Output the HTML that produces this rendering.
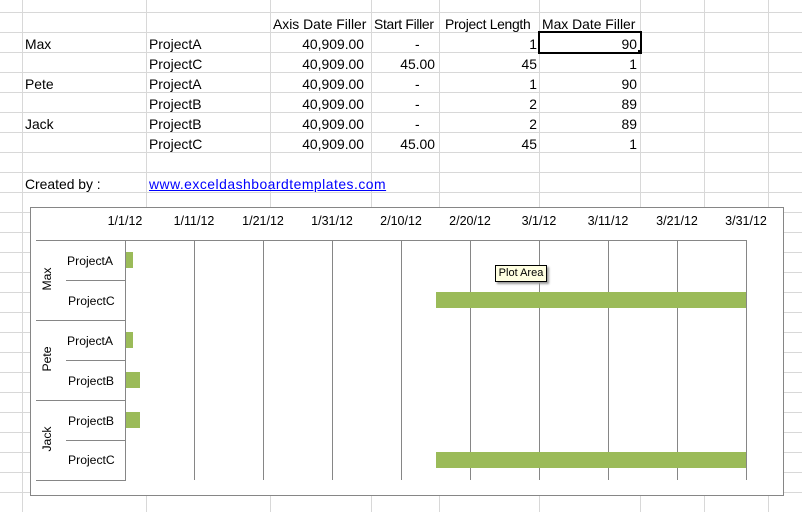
<!DOCTYPE html><html><head><style>
body{margin:0;width:802px;height:512px;overflow:hidden;background:#fff;font-family:"Liberation Sans",sans-serif;font-size:13.9px;color:#000;position:relative}
.v,.h,.l{position:absolute;background:#d8d8d8}
.v{width:1px;top:0;height:512px}.h{height:1px;left:0;width:802px}
.t{position:absolute;white-space:nowrap;line-height:20px;margin-top:1px}
.r{text-align:right}
.c{position:absolute;background:#868686}
.b{position:absolute;background:#9bbb59}
.d{position:absolute;top:214px;width:70px;text-align:center;font-size:12.5px}
.p{position:absolute;font-size:12.2px;white-space:nowrap}
.rot{position:absolute;font-size:12.2px;transform:rotate(-90deg);transform-origin:center;width:40px;text-align:center}
</style></head><body>
<div class="v" style="left:22px"></div><div class="v" style="left:146px"></div><div class="v" style="left:270px"></div><div class="v" style="left:371px"></div><div class="v" style="left:439px"></div><div class="v" style="left:539px"></div><div class="v" style="left:640px"></div><div class="v" style="left:704px"></div><div class="v" style="left:768px"></div>
<div class="h" style="top:12px"></div><div class="h" style="top:32px"></div><div class="h" style="top:52px"></div><div class="h" style="top:72px"></div><div class="h" style="top:92px"></div><div class="h" style="top:112px"></div><div class="h" style="top:132px"></div><div class="h" style="top:152px"></div><div class="h" style="top:172px"></div><div class="h" style="top:192px"></div><div class="h" style="top:212px"></div><div class="h" style="top:232px"></div><div class="h" style="top:252px"></div><div class="h" style="top:272px"></div><div class="h" style="top:292px"></div><div class="h" style="top:312px"></div><div class="h" style="top:332px"></div><div class="h" style="top:352px"></div><div class="h" style="top:372px"></div><div class="h" style="top:392px"></div><div class="h" style="top:412px"></div><div class="h" style="top:432px"></div><div class="h" style="top:452px"></div><div class="h" style="top:472px"></div><div class="h" style="top:492px"></div>

<div class="t" style="left:273px;top:13px">Axis Date Filler</div>
<div class="t" style="left:374px;top:13px;letter-spacing:-0.3px">Start Filler</div>
<div class="t" style="left:445px;top:13px;letter-spacing:-0.3px">Project Length</div>
<div class="t" style="left:542px;top:13px">Max Date Filler</div>

<div class="t" style="left:25px;top:33px">Max</div><div class="t" style="left:25px;top:73px">Pete</div><div class="t" style="left:25px;top:113px">Jack</div>
<div class="t" style="left:149px;top:33px">ProjectA</div><div class="t" style="left:149px;top:53px">ProjectC</div><div class="t" style="left:149px;top:73px">ProjectA</div><div class="t" style="left:149px;top:93px">ProjectB</div><div class="t" style="left:149px;top:113px">ProjectB</div><div class="t" style="left:149px;top:133px">ProjectC</div>

<div class="t r" style="left:260px;width:104px;top:33px">40,909.00</div><div class="t r" style="left:260px;width:104px;top:53px">40,909.00</div><div class="t r" style="left:260px;width:104px;top:73px">40,909.00</div><div class="t r" style="left:260px;width:104px;top:93px">40,909.00</div><div class="t r" style="left:260px;width:104px;top:113px">40,909.00</div><div class="t r" style="left:260px;width:104px;top:133px">40,909.00</div>

<div class="t" style="left:415px;top:33px">-</div><div class="t r" style="left:371px;width:64px;top:53px">45.00</div><div class="t" style="left:415px;top:73px">-</div><div class="t" style="left:415px;top:93px">-</div><div class="t" style="left:415px;top:113px">-</div><div class="t r" style="left:371px;width:64px;top:133px">45.00</div>

<div class="t r" style="left:439px;width:98px;top:33px">1</div><div class="t r" style="left:439px;width:98px;top:53px">45</div><div class="t r" style="left:439px;width:98px;top:73px">1</div><div class="t r" style="left:439px;width:98px;top:93px">2</div><div class="t r" style="left:439px;width:98px;top:113px">2</div><div class="t r" style="left:439px;width:98px;top:133px">45</div>

<div style="position:absolute;left:538px;top:31px;width:100px;height:19px;border:2px solid #000;box-sizing:content-box"></div>
<div style="position:absolute;left:638px;top:50px;width:4px;height:4px;background:#000"></div>
<div class="t r" style="left:539px;width:98px;top:33px">90</div><div class="t r" style="left:539px;width:98px;top:53px">1</div><div class="t r" style="left:539px;width:98px;top:73px">90</div><div class="t r" style="left:539px;width:98px;top:93px">89</div><div class="t r" style="left:539px;width:98px;top:113px">89</div><div class="t r" style="left:539px;width:98px;top:133px">1</div>

<div class="t" style="left:25px;top:173px">Created by :</div>
<div class="t" style="left:149px;top:173px;color:#0000ff;text-decoration:underline;letter-spacing:0.5px">www.exceldashboardtemplates.com</div>

<div style="position:absolute;left:30px;top:207px;width:752px;height:287px;background:#fff;border:1px solid #868686"></div>
<div class="d" style="left:90px">1/1/12</div><div class="d" style="left:159px">1/11/12</div><div class="d" style="left:228px">1/21/12</div><div class="d" style="left:297px">1/31/12</div><div class="d" style="left:366px">2/10/12</div><div class="d" style="left:435px">2/20/12</div><div class="d" style="left:504px">3/1/12</div><div class="d" style="left:573px">3/11/12</div><div class="d" style="left:642px">3/21/12</div><div class="d" style="left:711px">3/31/12</div>
<div class="c" style="left:36px;top:240px;width:711px;height:1px"></div>
<div class="c" style="left:125px;top:240px;width:1px;height:241px"></div>
<div class="c" style="left:194px;top:240px;width:1px;height:240px"></div><div class="c" style="left:263px;top:240px;width:1px;height:240px"></div><div class="c" style="left:332px;top:240px;width:1px;height:240px"></div><div class="c" style="left:401px;top:240px;width:1px;height:240px"></div><div class="c" style="left:470px;top:240px;width:1px;height:240px"></div><div class="c" style="left:539px;top:240px;width:1px;height:240px"></div><div class="c" style="left:608px;top:240px;width:1px;height:240px"></div><div class="c" style="left:677px;top:240px;width:1px;height:240px"></div><div class="c" style="left:746px;top:240px;width:1px;height:240px"></div>
<div class="c" style="left:36px;top:320px;width:90px;height:1px"></div><div class="c" style="left:36px;top:400px;width:90px;height:1px"></div><div class="c" style="left:36px;top:480px;width:90px;height:1px"></div>
<div class="c" style="left:66px;top:280px;width:60px;height:1px"></div><div class="c" style="left:66px;top:360px;width:60px;height:1px"></div><div class="c" style="left:66px;top:440px;width:60px;height:1px"></div>
<div class="rot" style="left:27px;top:272px">Max</div><div class="rot" style="left:27px;top:352px">Pete</div><div class="rot" style="left:27px;top:432px">Jack</div>
<div class="p" style="left:67px;top:254px">ProjectA</div><div class="p" style="left:68px;top:294px">ProjectC</div><div class="p" style="left:67px;top:334px">ProjectA</div><div class="p" style="left:68px;top:374px">ProjectB</div><div class="p" style="left:68px;top:414px">ProjectB</div><div class="p" style="left:68px;top:453px">ProjectC</div>
<div class="b" style="left:126px;top:252px;width:7px;height:16px"></div>
<div class="b" style="left:436px;top:292px;width:310px;height:16px"></div>
<div class="b" style="left:126px;top:332px;width:7px;height:16px"></div>
<div class="b" style="left:126px;top:372px;width:14px;height:16px"></div>
<div class="b" style="left:126px;top:412px;width:14px;height:16px"></div>
<div class="b" style="left:436px;top:452px;width:310px;height:16px"></div>
<div style="position:absolute;left:495px;top:265px;width:50px;height:15px;background:#ffffe1;border:1px solid #000;box-shadow:2px 2px 2px #999;font-size:11px;line-height:15px;text-align:center">Plot Area</div>
</body></html>
